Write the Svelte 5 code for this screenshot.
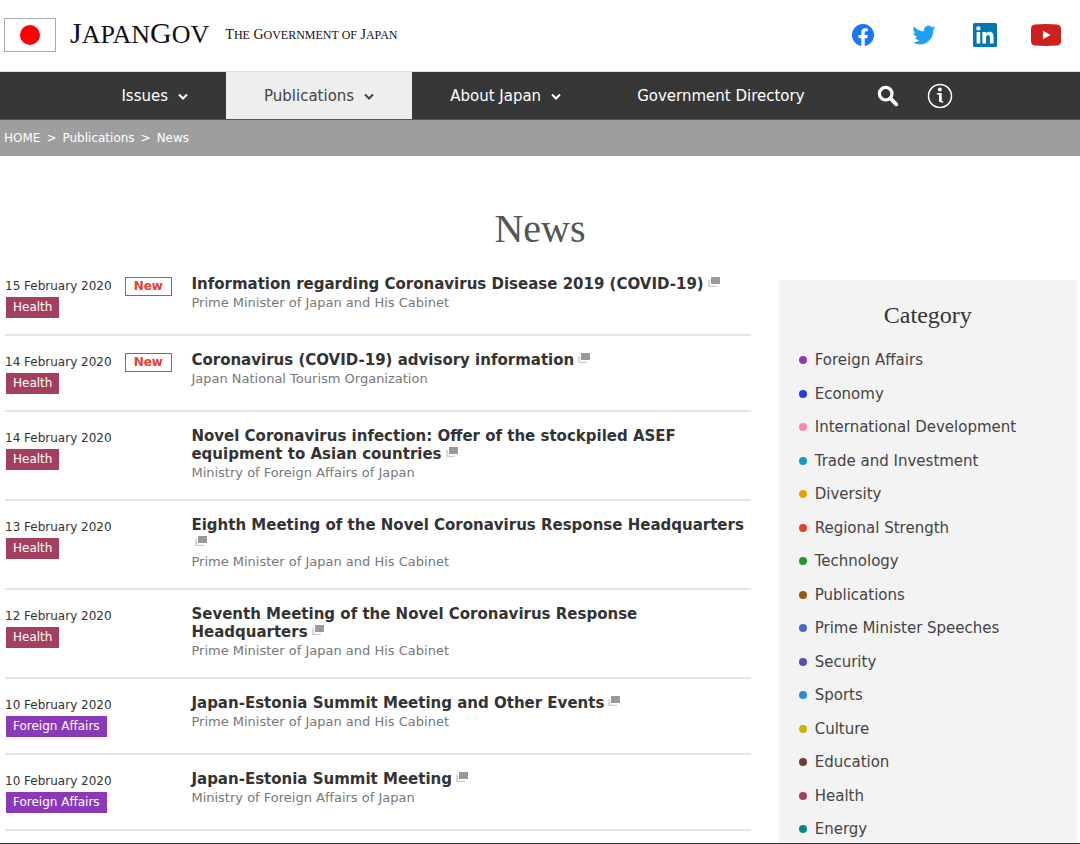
<script lang="ts">
    const navItems = [
        { label: 'Issues', menu: true, active: false },
        { label: 'Publications', menu: true, active: true },
        { label: 'About Japan', menu: true, active: false },
        { label: 'Government Directory', menu: false, active: false }
    ];

    const kantei = 'Prime Minister of Japan and His Cabinet';
    const mofa = 'Ministry of Foreign Affairs of Japan';

    const news = [
        { date: '15 February 2020', isNew: true, tag: 'Health', title: 'Information regarding Coronavirus Disease 2019 (COVID-19)', source: kantei },
        { date: '14 February 2020', isNew: true, tag: 'Health', title: 'Coronavirus (COVID-19) advisory information', source: 'Japan National Tourism Organization' },
        { date: '14 February 2020', isNew: false, tag: 'Health', title: 'Novel Coronavirus infection: Offer of the stockpiled ASEF equipment to Asian countries', source: mofa },
        { date: '13 February 2020', isNew: false, tag: 'Health', title: 'Eighth Meeting of the Novel Coronavirus Response Headquarters', source: kantei },
        { date: '12 February 2020', isNew: false, tag: 'Health', title: 'Seventh Meeting of the Novel Coronavirus Response Headquarters', source: kantei },
        { date: '10 February 2020', isNew: false, tag: 'Foreign Affairs', title: 'Japan-Estonia Summit Meeting and Other Events', source: kantei },
        { date: '10 February 2020', isNew: false, tag: 'Foreign Affairs', title: 'Japan-Estonia Summit Meeting', source: mofa }
    ];

    const categories = [
        { name: 'Foreign Affairs', color: '#8a3ab9' },
        { name: 'Economy', color: '#2b35e0' },
        { name: 'International Development', color: '#ff85b6' },
        { name: 'Trade and Investment', color: '#0e9ac8' },
        { name: 'Diversity', color: '#e8a200' },
        { name: 'Regional Strength', color: '#e0402a' },
        { name: 'Technology', color: '#23962f' },
        { name: 'Publications', color: '#8f5a14' },
        { name: 'Prime Minister Speeches', color: '#4468c8' },
        { name: 'Security', color: '#5a4ba8' },
        { name: 'Sports', color: '#2b8bdb' },
        { name: 'Culture', color: '#cdb400' },
        { name: 'Education', color: '#6b3e36' },
        { name: 'Health', color: '#a43f5f' },
        { name: 'Energy', color: '#008c86' }
    ];

    function tagColor(tag: string) {
        return categories.find((c) => c.name === tag)?.color;
    }
</script>

<div class="page">
    <header>
        <a class="brand" href="#home">
            <span class="flag"><span class="sun"></span></span>
            <span class="name">J<small>APAN</small>G<small>OV</small></span>
            <span class="tagline">T<small>HE</small> G<small>OVERNMENT OF</small> J<small>APAN</small></span>
        </a>
        <div class="social">
            <a href="#facebook" aria-label="Facebook">
                <svg width="24" height="24" viewBox="0 0 24 24">
                    <path fill="#1877f2" d="M23 12.07C23 5.99 18.08 1 12 1S1 5.99 1 12.07c0 5.5 4.02 10.06 9.28 10.93v-7.79H7.49v-3.14h2.79V9.62c0-2.77 1.64-4.3 4.15-4.3 1.2 0 2.46.22 2.46.22v2.72h-1.39c-1.36 0-1.79.85-1.79 1.73v2.08h3.05l-.49 3.14h-2.56V23C18.98 22.13 23 17.57 23 12.07z" />
                </svg>
            </a>
            <a href="#twitter" aria-label="Twitter">
                <svg width="24" height="24" viewBox="0 0 24 24">
                    <path fill="#1da1f2" d="M23.6 4.9c-.85.38-1.76.63-2.72.75a4.75 4.75 0 0 0 2.08-2.62c-.91.54-1.93.93-3 1.15a4.74 4.74 0 0 0-8.07 4.32A13.45 13.45 0 0 1 2.12 3.54a4.74 4.74 0 0 0 1.47 6.32 4.7 4.7 0 0 1-2.15-.59v.06c0 2.3 1.63 4.21 3.8 4.65a4.8 4.8 0 0 1-2.14.08 4.74 4.74 0 0 0 4.42 3.29A9.5 9.5 0 0 1 .5 19.31a13.4 13.4 0 0 0 7.26 2.13c8.71 0 13.48-7.22 13.48-13.48l-.02-.61A9.6 9.6 0 0 0 23.6 4.9z" />
                </svg>
            </a>
            <a href="#linkedin" aria-label="LinkedIn">
                <svg width="24" height="24" viewBox="0 0 24 24">
                    <rect width="24" height="24" rx="1.5" fill="#0077b5" />
                    <circle cx="5.4" cy="5.4" r="2.1" fill="#fff" />
                    <path fill="#fff" d="M3.6 9.1h3.6v11.3H3.6zM9.4 9.1h3.4v1.6c.5-.95 1.7-1.9 3.5-1.9 3.6 0 4.2 2.3 4.2 5.4v6.2h-3.6v-5.5c0-1.3 0-3-1.8-3s-2.1 1.4-2.1 2.9v5.6H9.4z" />
                </svg>
            </a>
            <a href="#youtube" aria-label="YouTube">
                <svg width="32" height="24" viewBox="0 0 32 24">
                    <path fill="#cd201f" d="M5 1.4Q16 .6 27 1.4 31 1.7 31 6v12q0 4.3-4 4.6-11 .8-22 0Q1 22.3 1 18V6Q1 1.7 5 1.4z" />
                    <path fill="#fff" d="M13 7.8v8.4l7.5-4.2z" />
                </svg>
            </a>
        </div>
    </header>

    <nav class="main-nav">
        {#each navItems as item}
            <a href="#nav" class:active={item.active}>
                {item.label}
                {#if item.menu}
                    <svg width="10" height="8" viewBox="0 0 10 8">
                        <path d="M1 2.5l4 4 4-4" fill="none" stroke="currentColor" stroke-width="2" />
                    </svg>
                {/if}
            </a>
        {/each}
        <button class="search" aria-label="Search">
            <svg width="22" height="22" viewBox="0 0 22 22" fill="none" stroke="#fff">
                <circle cx="8.7" cy="8.7" r="6.3" stroke-width="3.2" />
                <path d="M13.5 13.5l5.8 5.8" stroke-width="3.8" stroke-linecap="round" />
            </svg>
        </button>
        <button aria-label="Information">
            <svg width="26" height="26" viewBox="0 0 26 26">
                <circle cx="13" cy="13" r="11.5" fill="none" stroke="#fff" stroke-width="1.5" />
                <circle cx="12.8" cy="6.6" r="2" fill="#fff" />
                <path d="M9.9 10.7h3.9v7.2q0 1.500 2.4.7" fill="none" stroke="#fff" stroke-width="1.6" />
                <path d="M12 10.7h2.4v8.2H12z" fill="#fff" />
            </svg>
        </button>
    </nav>

    <nav class="breadcrumb" aria-label="Breadcrumb">
        <a href="#home">HOME</a><span>&gt;</span><a href="#publications">Publications</a><span>&gt;</span><a href="#news">News</a>
    </nav>

    <h1>News</h1>

    <div class="content">
        <main>
            {#each news as item}
                <article>
                    <div class="meta">
                        <div class="date">
                            <time>{item.date}</time>
                            {#if item.isNew}<span class="new">New</span>{/if}
                        </div>
                        <a class="tag" href="#tag" style="background: {tagColor(item.tag)}">{item.tag}</a>
                    </div>
                    <div class="text">
                        <h2>
                            <a href="#article">{item.title}<wbr /><svg width="12" height="10" viewBox="0 0 12 10">
                                <path d="M1 3v6.5h8" fill="none" stroke="#ccc" stroke-width="1.5" />
                                <rect x="3" width="9" height="7" fill="#999" />
                            </svg></a>
                        </h2>
                        <p>{item.source}</p>
                    </div>
                </article>
            {/each}
        </main>

        <aside>
            <h3>Category</h3>
            <ul>
                {#each categories as category}
                    <li>
                        <span class="dot" style="background: {category.color}"></span>
                        <a href="#category">{category.name}</a>
                    </li>
                {/each}
            </ul>
        </aside>
    </div>
</div>

<style>
    :global(body) {
        margin: 0;
        background: #fff;
    }

    .page {
        display: flex;
        flex-direction: column;
        min-height: 100vh;
        box-sizing: border-box;
        border-bottom: 1px solid #333;
        font-family: "DejaVu Sans", Verdana, sans-serif;
        font-size: 12px;
        color: #333;
    }

    a {
        color: inherit;
        text-decoration: none;
    }

    svg {
        display: block;
    }

    header {
        display: flex;
        justify-content: space-between;
        align-items: center;
        height: 70px;
        padding: 0 18px 1px 4px;
        border-bottom: 1px solid #ddd;
    }

    .brand {
        display: flex;
        align-items: center;
        font-family: "Liberation Serif", serif;
        color: #111;
        white-space: nowrap;
    }

    .flag {
        display: flex;
        align-items: center;
        justify-content: center;
        width: 50px;
        height: 32px;
        border: 1px solid #aaa;
    }

    .sun {
        width: 20px;
        height: 20px;
        border-radius: 50%;
        background: #f00;
    }

    .name {
        margin: 0 16px 0 14px;
        padding-bottom: 4px;
        font-size: 30px;
    }

    .name small {
        font-size: 26px;
    }

    .tagline {
        font-size: 14px;
    }

    .tagline small {
        font-size: 12px;
    }

    .social {
        display: flex;
        gap: 29px;
    }

    .social a {
        display: flex;
        justify-content: center;
        width: 32px;
    }

    .main-nav {
        display: flex;
        justify-content: center;
        height: 47px;
        padding-right: 30px;
        background: #373737;
        border-bottom: 1px solid #555;
        color: #fff;
        font-size: 15px;
    }

    .main-nav a {
        display: flex;
        align-items: center;
        gap: 10px;
        padding: 0 38px;
        white-space: nowrap;
    }

    .main-nav a.active {
        background: #eee;
        color: #444;
    }

    .main-nav button {
        display: flex;
        align-items: center;
        padding: 0 14px;
        border: 0;
        background: none;
        cursor: pointer;
    }

    .main-nav .search {
        margin-left: 20px;
    }

    .breadcrumb {
        display: flex;
        align-items: center;
        gap: 6px;
        height: 36px;
        padding: 0 4px;
        background: #9e9e9e;
        color: #fff;
    }

    h1 {
        margin: 50px 0 8px;
        font: 40px/46px "Liberation Serif", serif;
        text-align: center;
        color: #555;
    }

    .content {
        flex: 1;
        display: grid;
        grid-template-columns: 5fr 2fr;
        gap: 28px;
        padding: 0 3px 0 5px;
    }

    article {
        display: grid;
        grid-template-columns: 1fr 3fr;
        padding: 15px 0 16px;
        border-bottom: 2px solid #e5e5e5;
    }

    .date {
        display: flex;
        align-items: center;
        gap: 13px;
        height: 22px;
        white-space: nowrap;
    }

    .new {
        padding: 0 8px;
        border: 1px solid #e8402f;
        color: #e8402f;
        font-weight: bold;
        line-height: 17px;
    }

    .tag {
        display: inline-block;
        margin-left: 1px;
        padding: 0 7px;
        color: #fff;
        line-height: 21px;
    }

    h2 {
        margin: 0;
        font-size: 15px;
        line-height: 18px;
    }

    h2 svg {
        display: inline-block;
        margin-left: 4px;
        vertical-align: 2px;
    }

    p {
        margin: 0;
        font-size: 13px;
        line-height: 20px;
        color: #777;
    }

    aside {
        display: flex;
        flex-direction: column;
        margin-top: 20px;
        padding: 20px 20px 4px;
        background: #f3f3f3;
    }

    h3 {
        margin: 0 0 20px;
        font: 24px/30px "Liberation Serif", serif;
        text-align: center;
    }

    ul {
        flex: 1;
        display: flex;
        flex-direction: column;
        justify-content: space-between;
        margin: 0;
        padding: 0;
        list-style: none;
        font-size: 15px;
        line-height: 20px;
        color: #444;
    }

    li {
        display: flex;
        align-items: center;
        gap: 8px;
        white-space: nowrap;
    }

    .dot {
        width: 8px;
        height: 8px;
        border-radius: 50%;
    }
</style>
